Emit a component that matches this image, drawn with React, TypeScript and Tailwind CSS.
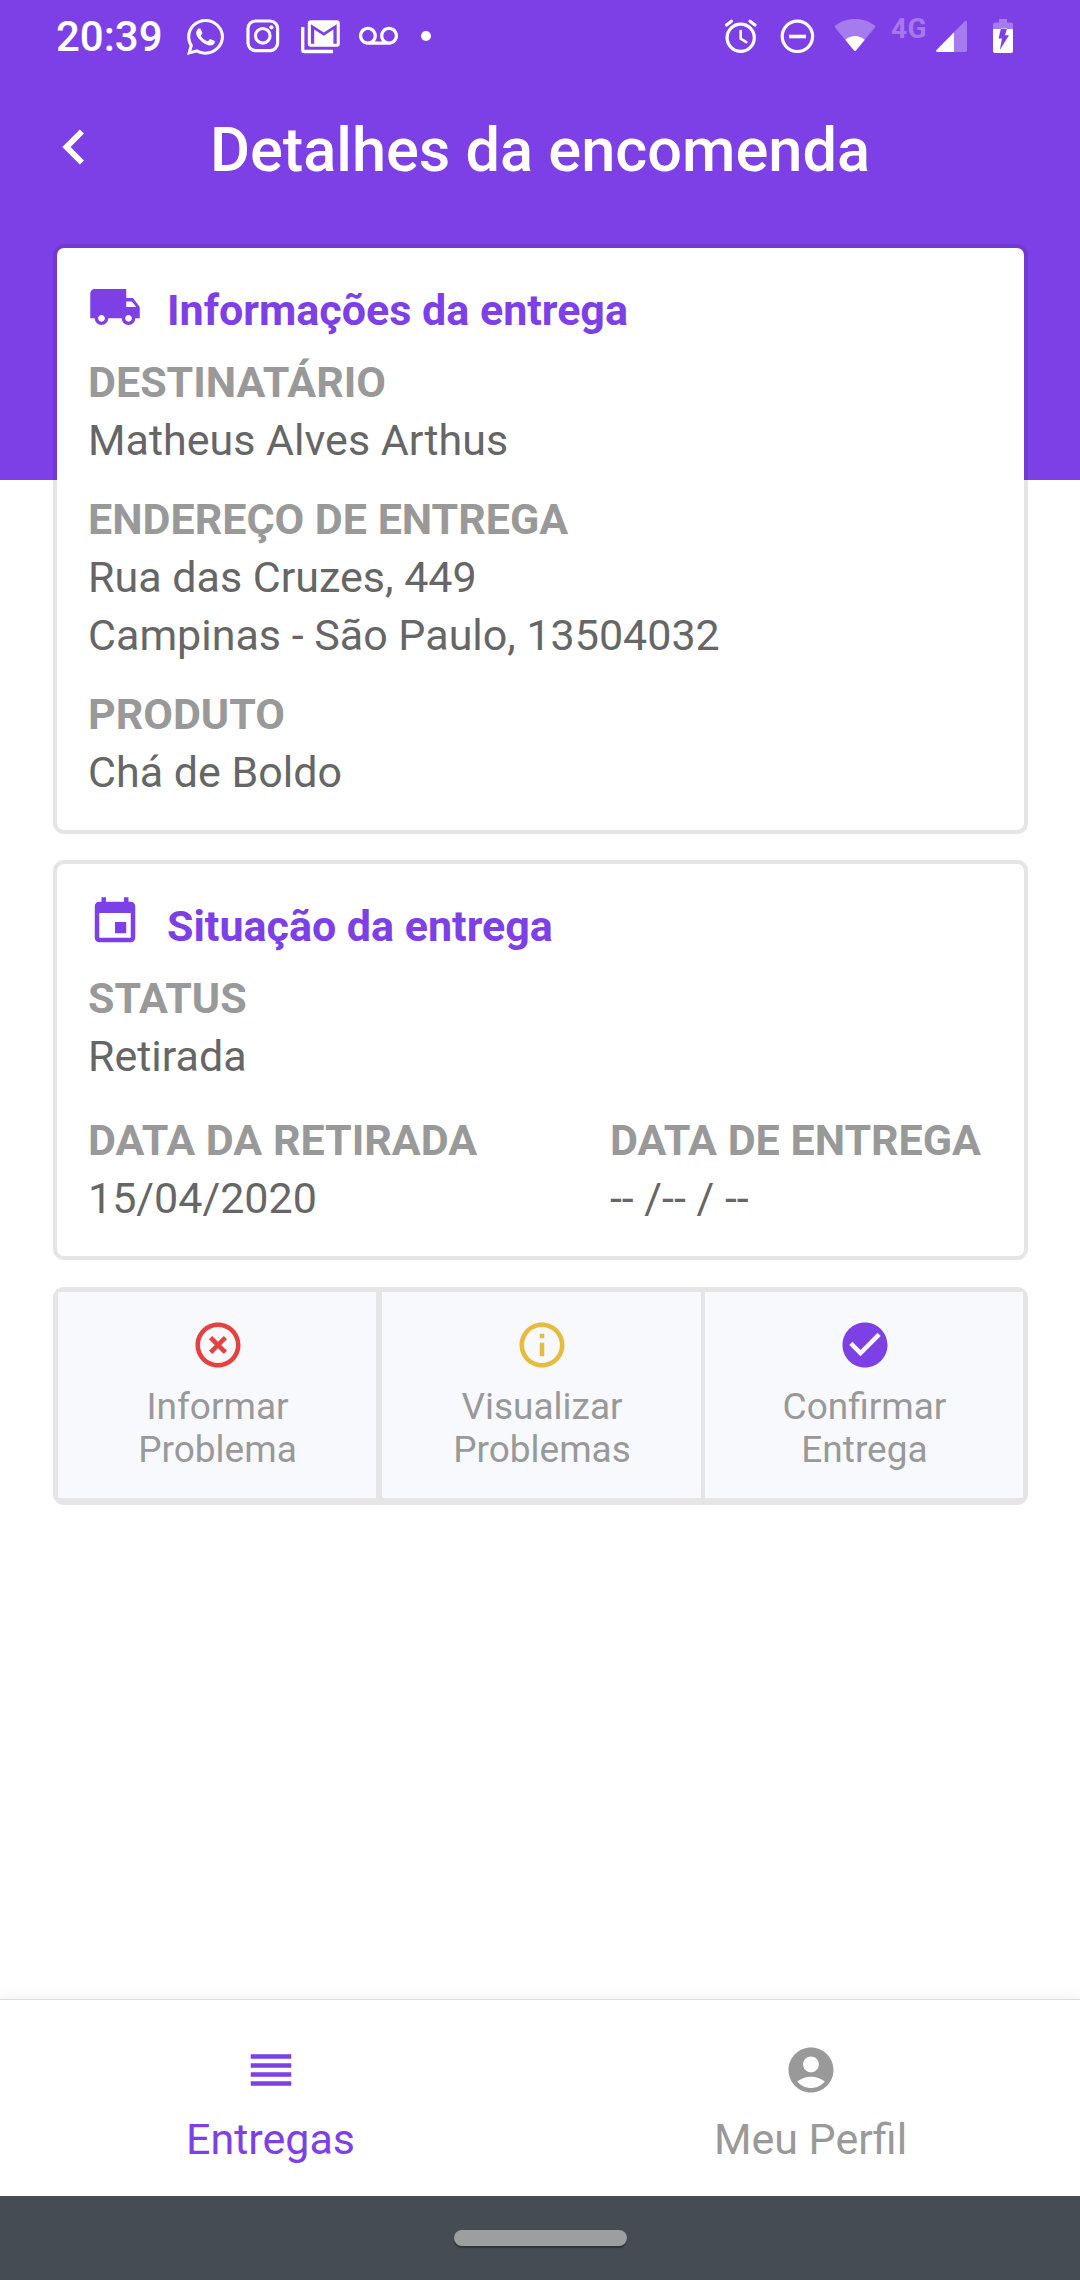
import type { ReactNode } from "react";
import {
  MdAccountCircle,
  MdCheckCircle,
  MdChevronLeft,
  MdHighlightOff,
  MdInfoOutline,
  MdLocalShipping,
  MdReorder,
  MdVoicemail,
} from "react-icons/md";
import { FaWhatsapp } from "react-icons/fa";

function InstagramIcon() {
  return (
    <svg className="ml-[22px] h-[34px] w-[34px] shrink-0" viewBox="0 0 34 34" fill="none" stroke="white">
      <rect x="2" y="2" width="29.6" height="29.6" rx="7.5" strokeWidth="3.2" />
      <circle cx="16.8" cy="16.8" r="7.3" strokeWidth="3.1" />
      <circle cx="25.4" cy="8.3" r="2.1" fill="white" stroke="none" />
    </svg>
  );
}

function GmailIcon() {
  return (
    <svg className="ml-[20px] mt-px h-[34px] w-[40px] shrink-0" viewBox="0 0 40 34" fill="white">
      <path d="M1 7h3.400v22.800h28.600v3.500H4.400A3.400 3.400 0 0 1 1 29.800z" />
      <path
        fillRule="evenodd"
        d="M10.800 0.3h26a3 3 0 0 1 3 3v20.500a3 3 0 0 1-3 3h-26a3 3 0 0 1-3-3V3.300a3 3 0 0 1 3-3zM10.900 4.200v19.500h3.300V9.600L23.800 15.800l9.600-6.200v14.100h3.300V4.200L23.800 12.400z"
      />
    </svg>
  );
}

function AlarmIcon() {
  return (
    <svg className="h-[36px] w-[34px] shrink-0" viewBox="0 0 34 36" fill="none" stroke="white" strokeLinecap="round">
      <circle cx="16.700" cy="19.800" r="13.600" strokeWidth="3.200" />
      <path d="M16.700 13v7.700l5.600 3.400" strokeWidth="2.600" strokeLinejoin="round" />
      <path d="M2.500 7L7.500 3.200M31 7L26 3.200" strokeWidth="3.200" />
    </svg>
  );
}

function DoNotDisturbIcon() {
  return (
    <svg className="ml-[22px] h-[36px] w-[36px] shrink-0" viewBox="0 0 36 36" fill="none" stroke="white">
      <circle cx="17.400" cy="18.300" r="15.200" strokeWidth="3.200" />
      <path d="M9 18.500h17" strokeWidth="3.600" />
    </svg>
  );
}

function WifiIcon() {
  return (
    <svg className="mb-[2px] ml-[18px] h-[34px] w-[42px] shrink-0" viewBox="0 0 42 34" fill="white">
      <path fillOpacity=".31" d="M21 1C13.200 1 6 3.600 1.200 7.600c-.6.500-.6 1.200-.1 1.800L19.800 32.300q1.200 1.200 2.400 0L40.900 9.400c.5-.6.5-1.300-.1-1.800C36 3.600 28.800 1 21 1z" />
      <path d="M11.300 21.800c5.700-5 13.700-5 19.400 0l-8.500 10.500q-1.200 1.200-2.400 0z" />
    </svg>
  );
}

function SignalIcon() {
  return (
    <svg className="ml-[9px] h-[32px] w-[32px] shrink-0" viewBox="0 0 32 32" fill="white">
      <path fillOpacity=".31" d="M18 12.300L28.800 1.300C30 .3 31 1 31 2.200v27.800a2 2 0 0 1-2 2H18z" />
      <path d="M18 12.300V32H1.300Q-.5 31.600.5 30z" />
    </svg>
  );
}

function BatteryIcon() {
  return (
    <svg className="ml-[25px] h-[34px] w-[20px] shrink-0" viewBox="0 0 20 34" fill="white">
      <path fillOpacity=".31" d="M6 0h8v3.500h4a2 2 0 0 1 2 2V10H0V5.500a2 2 0 0 1 2-2h4z" />
      <path fillRule="evenodd" d="M0 10h20v22a2 2 0 0 1-2 2H2a2 2 0 0 1-2-2zM8 9.500L5.500 19.500H9L6.800 31 16 16.300H12L14 9.500z" />
    </svg>
  );
}

function CalendarIcon() {
  return (
    <svg className="mb-[2px] h-[54px] w-[54px] shrink-0" viewBox="0 0 24 24" fill="currentColor">
      <path d="M17 12h-5v5h5v-5zM16 1v2H8V1H6v2H5c-1.110 0-1.990.9-1.990 2L3 19c0 1.100.89 2 2 2h14c1.100 0 2-.9 2-2V5c0-1.100-.9-2-2-2h-1V1h-2zm3 18H5V8h14v11z" />
    </svg>
  );
}

function StatusBar() {
  return (
    <div className="flex h-[72px] items-center pl-[56px] pr-[67px] text-white">
      <span className="mt-[2px] w-[131px] whitespace-nowrap text-[42px] font-medium leading-none">20:39</span>
      <FaWhatsapp className="mt-px h-[36px] w-[37px] shrink-0" viewBox="0 32 448 448" preserveAspectRatio="none" />
      <InstagramIcon />
      <GmailIcon />
      <MdVoicemail className="ml-[19px] h-[39px] w-[39px] shrink-0" />
      <span className="ml-[23px] h-[10px] w-[10px] rounded-full bg-white" />
      <div className="ml-auto flex items-center">
        <AlarmIcon />
        <DoNotDisturbIcon />
        <WifiIcon />
        <span className="mb-[14px] ml-[15px] w-[36px] text-[28px] font-bold leading-none tracking-[0.5px] text-[#a678ee]">4G</span>
        <SignalIcon />
        <BatteryIcon />
      </div>
    </div>
  );
}

function Card({ icon, title, children }: { icon: ReactNode; title: string; children: ReactNode }) {
  return (
    <section className="rounded-[11px] border-4 border-black/10 bg-white bg-clip-padding px-[31px] pt-[32px]">
      <div className="flex h-[54px] items-center text-[#7d40e7]">
        {icon}
        <h2 className="ml-[25px] mt-[6px] text-[43px] font-bold leading-[58px]">{title}</h2>
      </div>
      {children}
    </section>
  );
}

function Field({ label, lines, className }: { label: string; lines: string[]; className: string }) {
  return (
    <div className={className}>
      <h3 className="whitespace-nowrap text-[43px] font-bold leading-[58px] text-[#999]">{label}</h3>
      {lines.map((line) => (
        <p key={line} className="whitespace-nowrap text-[43px] leading-[58px] text-[#666]">
          {line}
        </p>
      ))}
    </div>
  );
}

function Action({ icon, first, second }: { icon: ReactNode; first: string; second: string }) {
  return (
    <button className="flex h-full flex-col items-center bg-[#f8f9fd] pl-px pt-[26px] text-[37px] leading-[43px] text-[#999]">
      {icon}
      <span className="mt-[13px]">{first}</span>
      <span>{second}</span>
    </button>
  );
}

export default function App() {
  return (
    <div className="flex h-[2280px] w-[1080px] flex-col overflow-hidden bg-white font-['Roboto',sans-serif]">
      <header className="h-[480px] shrink-0 bg-[#7d40e7]">
        <StatusBar />
        <div className="grid h-[150px] grid-cols-[140px_1fr_140px] items-center text-white">
          <MdChevronLeft className="mb-px ml-[39px] h-[70px] w-[70px]" />
          <h1 className="mt-[6px] whitespace-nowrap text-center text-[61.300px] font-medium leading-[80px]">Detalhes da encomenda</h1>
        </div>
      </header>

      <main className="-mt-[236px] flex flex-1 flex-col pl-[53px] pr-[52px]">
        <div className="flex h-[590px] flex-col [&>section]:flex-1">
          <Card icon={<MdLocalShipping className="h-[54px] w-[54px] shrink-0" />} title="Informações da entrega">
            <Field className="mt-[19px]" label="DESTINATÁRIO" lines={["Matheus Alves Arthus"]} />
            <Field className="mt-[21px]" label="ENDEREÇO DE ENTREGA" lines={["Rua das Cruzes, 449", "Campinas - São Paulo, 13504032"]} />
            <Field className="mt-[21px]" label="PRODUTO" lines={["Chá de Boldo"]} />
          </Card>
        </div>

        <div className="mt-[26px] flex h-[400px] flex-col [&>section]:flex-1">
          <Card icon={<CalendarIcon />} title="Situação da entrega">
            <Field className="mt-[19px]" label="STATUS" lines={["Retirada"]} />
            <div className="mt-[26px] flex justify-between">
              <Field className="" label="DATA DA RETIRADA" lines={["15/04/2020"]} />
              <Field className="mr-[12px]" label="DATA DE ENTREGA" lines={["-- /-- / --"]} />
            </div>
          </Card>
        </div>

        <div className="mt-[27px] grid h-[218px] grid-cols-[318px_6px_319px_4px_318px] rounded-[11px] bg-[#e5e5e5] px-[5px] pb-[7px] pt-[5px]">
          <Action icon={<MdHighlightOff className="h-[54px] w-[54px] text-[#e74040]" />} first="Informar" second="Problema" />
          <span />
          <Action icon={<MdInfoOutline className="h-[54px] w-[54px] text-[#e7ba40]" />} first="Visualizar" second="Problemas" />
          <span />
          <Action icon={<MdCheckCircle className="h-[54px] w-[54px] text-[#7d40e7]" />} first="Confirmar" second="Entrega" />
        </div>
      </main>

      <nav className="grid h-[197px] shrink-0 grid-cols-2 border-t border-[#dcdcdc] bg-white text-[43px] leading-[58px] shadow-[0_-2px_12px_rgba(0,0,0,0.06)]">
        <a className="flex flex-col items-center pl-px pt-[43px] text-[#7d40e7]">
          <MdReorder className="h-[54px] w-[54px]" />
          <span className="mt-[13px]">Entregas</span>
        </a>
        <a className="flex flex-col items-center pl-px pt-[43px] text-[#999]">
          <MdAccountCircle className="h-[54px] w-[54px]" />
          <span className="mt-[13px]">Meu Perfil</span>
        </a>
      </nav>

      <footer className="flex h-[84px] shrink-0 justify-center bg-[#464d52] pt-[34px]">
        <span className="h-4 w-[173px] rounded-full bg-[#9b9f9f] shadow-[0_2px_1px_#2f3537]" />
      </footer>
    </div>
  );
}
